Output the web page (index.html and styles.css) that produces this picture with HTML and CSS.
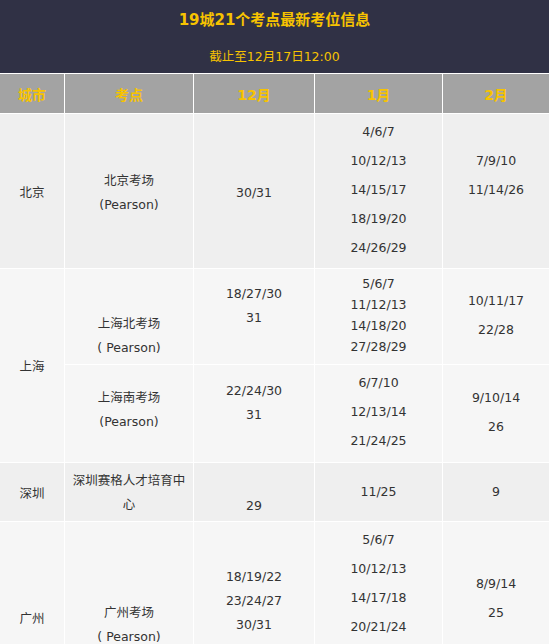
FILE: index.html
```html
<!DOCTYPE html>
<html lang="zh-CN">
<head>
<meta charset="utf-8">
<title>19城21个考点最新考位信息</title>
<link rel="stylesheet" href="styles.css">
</head>
<body>
<div class="banner">
  <div class="title">19城21个考点最新考位信息</div>
  <div class="subtitle">截止至12月17日12:00</div>
</div>
<table class="seats">
  <colgroup>
    <col class="c-city"><col class="c-site"><col class="c-dec"><col class="c-jan"><col class="c-feb">
  </colgroup>
  <thead>
    <tr><th>城市</th><th>考点</th><th>12月</th><th>1月</th><th>2月</th></tr>
  </thead>
  <tbody>
    <tr class="r-bj odd">
      <td class="l20 pt69">北京</td>
      <td class="l24 pt55">北京考场<br>(Pearson)</td>
      <td class="l20 pt69">30/31</td>
      <td class="l29 pt3">4/6/7<br>10/12/13<br>14/15/17<br>18/19/20<br>24/26/29</td>
      <td class="l29 pt32">7/9/10<br>11/14/26</td>
    </tr>
    <tr class="r-sh1 even">
      <td rowspan="2" class="l20 pt88">上海</td>
      <td class="l24 pt43">上海北考场<br>( Pearson)</td>
      <td class="l24 pt13">18/27/30<br>31</td>
      <td class="l21 pt4">5/6/7<br>11/12/13<br>14/18/20<br>27/28/29</td>
      <td class="l29 pt17">10/11/17<br>22/28</td>
    </tr>
    <tr class="r-sh2 even">
      <td class="l24 pt21">上海南考场<br>(Pearson)</td>
      <td class="l24 pt14">22/24/30<br>31</td>
      <td class="l29 pt3">6/7/10<br>12/13/14<br>21/24/25</td>
      <td class="l29 pt18">9/10/14<br>26</td>
    </tr>
    <tr class="r-sz odd">
      <td class="l20 pt21">深圳</td>
      <td class="l24 pt6">深圳赛格人才培育中<br>心</td>
      <td class="l20 pt33">29</td>
      <td class="l20 pt19">11/25</td>
      <td class="l20 pt19">9</td>
    </tr>
    <tr class="r-gz even">
      <td class="l20 pt87">广州</td>
      <td class="l24 pt79">广州考场<br>( Pearson)</td>
      <td class="l24 pt43">18/19/22<br>23/24/27<br>30/31</td>
      <td class="l29 pt3">5/6/7<br>10/12/13<br>14/17/18<br>20/21/24</td>
      <td class="l29 pt47">8/9/14<br>25</td>
    </tr>
  </tbody>
</table>
</body>
</html>
```
FILE: styles.css
```css
html, body {
  margin: 0;
  padding: 0;
  background: #ffffff;
}
body {
  font-family: "DejaVu Sans", "Noto Sans CJK SC", sans-serif;
  color: #333333;
  width: 549px;
}
.banner {
  background: #303145;
  height: 73px;
  box-sizing: border-box;
  padding-top: 10px;
  text-align: center;
  color: #f7c300;
}
.title {
  font-size: 15px;
  font-weight: bold;
  line-height: 20px;
}
.subtitle {
  font-size: 12.5px;
  line-height: 20px;
  margin-top: 17px;
}
.seats {
  width: 549px;
  table-layout: fixed;
  border-collapse: separate;
  border-spacing: 0;
  font-size: 12.5px;
}
.c-city { width: 65px; }
.c-site { width: 129px; }
.c-dec { width: 121px; }
.c-jan { width: 128px; }
.c-feb { width: 106px; }
.seats th {
  background: #a3a3a3;
  color: #f7c300;
  font-size: 14px;
  font-weight: bold;
  height: 41px;
  box-sizing: border-box;
  border-top: 1px solid #ffffff;
  border-bottom: 1px solid #ffffff;
  border-right: 1px solid #ffffff;
  padding: 3px 0 0 0;
  vertical-align: middle;
  line-height: 20px;
  text-align: center;
}
.seats td {
  box-sizing: border-box;
  border-bottom: 1px solid #ffffff;
  border-right: 1px solid #ffffff;
  padding: 0;
  vertical-align: top;
  text-align: center;
  white-space: nowrap;
}
.seats th:last-child, .seats tr td:last-child { border-right: 0; }
.odd td { background: #efefef; }
.even td { background: #f6f6f6; }
.r-bj { height: 155px; }
.r-sh1 { height: 96px; }
.r-sh2 { height: 98px; }
.r-sz { height: 59px; }
.r-gz { height: 152px; }
.l20 { line-height: 20px; }
.l21 { line-height: 21px; }
.l24 { line-height: 24px; }
.l29 { line-height: 29px; }
.pt3 { padding-top: 3px !important; }
.pt4 { padding-top: 4px !important; }
.pt6 { padding-top: 6px !important; }
.pt13 { padding-top: 13px !important; }
.pt14 { padding-top: 14px !important; }
.pt17 { padding-top: 17px !important; }
.pt18 { padding-top: 18px !important; }
.pt19 { padding-top: 19px !important; }
.pt21 { padding-top: 21px !important; }
.pt32 { padding-top: 32px !important; }
.pt33 { padding-top: 33px !important; }
.pt43 { padding-top: 43px !important; }
.pt47 { padding-top: 47px !important; }
.pt55 { padding-top: 55px !important; }
.pt69 { padding-top: 69px !important; }
.pt79 { padding-top: 79px !important; }
.pt87 { padding-top: 87px !important; }
.pt88 { padding-top: 88px !important; }
```
